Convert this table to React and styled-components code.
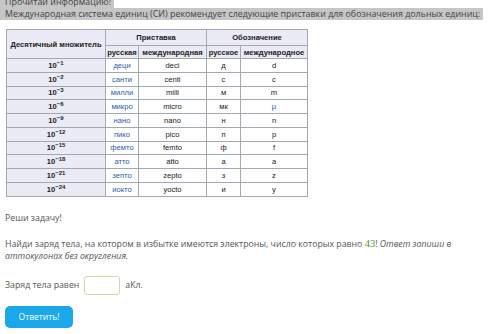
import React from "react";
import styled, { createGlobalStyle } from "styled-components";

const Global = createGlobalStyle`
  body {
    margin: 0;
    background: #ffffff;
    font-family: "Open Sans", "Liberation Sans", sans-serif;
    color: #555555;
  }
`;

const Page = styled.div`
  width: 500px;
  height: 334px;
  overflow: hidden;
  padding-left: 5px;
  box-sizing: border-box;
`;

const Intro = styled.div`
  margin-top: -4px;
  font-size: 8.9px;
  line-height: 12px;
  color: #444;
  white-space: nowrap;
`;

const Mark = styled.span`
  display: inline-block;
  background: #c6c6c6;
  margin-left: -5px;
  padding: 0 3px 0 5px;
`;

const Table = styled.table`
  margin: 9px 0 0 1px;
  border-collapse: collapse;
  table-layout: fixed;
  font-family: "Liberation Sans", Arial, sans-serif;
  font-size: 7.6px;
  color: #222;

  th,
  td {
    border: 1px solid #a2a9b1;
    padding: 0;
    text-align: center;
    white-space: nowrap;
    overflow: hidden;
  }

  th {
    background: #eaebf4;
    font-weight: bold;
  }

  td {
    background: #fff;
  }
`;

const HeadRow = styled.tr`
  height: ${(p) => p.$h}px;
`;

const Row = styled.tr`
  height: 13.75px;
`;

const Prefix = styled.td`
  && {
    color: #2a5db0;
  }
`;

const Sup = styled.sup`
  font-size: 6px;
  vertical-align: 3px;
  line-height: 0;
`;

const Body = styled.div`
  font-size: 8.75px;
  line-height: 12px;
  color: #555;
`;

const Para = styled.p`
  margin: ${(p) => p.$top}px 0 0 0;
  width: 470px;
`;

const Number = styled.span`
  font-family: "Liberation Serif", serif;
  font-size: 10.5px;
  line-height: 10px;
  color: #5f9222;
`;

const Note = styled.em`
  font-style: italic;
`;

const AnswerRow = styled.div`
  margin-top: 14px;
  display: flex;
  align-items: center;
  gap: 5px;
`;

const Input = styled.input`
  width: 36px;
  height: 19px;
  box-sizing: border-box;
  border: 1px solid #d5d8a4;
  border-radius: 3px;
  background: #fff;
  padding: 0;
  outline: none;
`;

const Button = styled.button`
  margin-top: 11px;
  width: 68px;
  height: 22px;
  border: none;
  border-radius: 5px;
  background: #1aa8ea;
  color: #fff;
  font-family: "Open Sans", "Liberation Sans", sans-serif;
  font-size: 8.5px;
  padding: 0;
  cursor: pointer;
`;

const rows = [
  ["1", "деци", "deci", "д", "d"],
  ["2", "санти", "centi", "с", "c"],
  ["3", "милли", "milli", "м", "m"],
  ["6", "микро", "micro", "мк", "µ"],
  ["9", "нано", "nano", "н", "n"],
  ["12", "пико", "pico", "п", "p"],
  ["15", "фемто", "femto", "ф", "f"],
  ["18", "атто", "atto", "а", "a"],
  ["21", "зепто", "zepto", "з", "z"],
  ["24", "иокто", "yocto", "и", "y"],
];

export default function App() {
  return (
    <Page>
      <Global />
      <Intro>
        <Mark>Прочитай информацию!</Mark>
        <br />
        <Mark>
          Международная система единиц (СИ) рекомендует следующие приставки для
          обозначения дольных единиц:
        </Mark>
      </Intro>
      <Table>
        <colgroup>
          <col style={{ width: 99 }} />
          <col style={{ width: 33 }} />
          <col style={{ width: 68 }} />
          <col style={{ width: 34 }} />
          <col style={{ width: 67 }} />
        </colgroup>
        <thead>
          <HeadRow $h={16}>
            <th rowSpan={2}>Десятичный множитель</th>
            <th colSpan={2}>Приставка</th>
            <th colSpan={2}>Обозначение</th>
          </HeadRow>
          <HeadRow $h={13}>
            <th>русская</th>
            <th>международная</th>
            <th>русское</th>
            <th>международное</th>
          </HeadRow>
        </thead>
        <tbody>
          {rows.map(([exp, ru, intl, ruSym, intlSym]) => (
            <Row key={exp}>
              <th>
                10<Sup>−{exp}</Sup>
              </th>
              <Prefix>{ru}</Prefix>
              <td>{intl}</td>
              <td>{ruSym}</td>
              {intlSym === "µ" ? <Prefix>{intlSym}</Prefix> : <td>{intlSym}</td>}
            </Row>
          ))}
        </tbody>
      </Table>
      <Body>
        <Para $top={15}>Реши задачу!</Para>
        <Para $top={14}>
          Найди заряд тела, на котором в избытке имеются электроны, число
          которых равно <Number>43</Number>! <Note>Ответ запиши в аттокулонах без округления.</Note>
        </Para>
        <AnswerRow>
          Заряд тела равен <Input /> аКл.
        </AnswerRow>
        <Button>Ответить!</Button>
      </Body>
    </Page>
  );
}
